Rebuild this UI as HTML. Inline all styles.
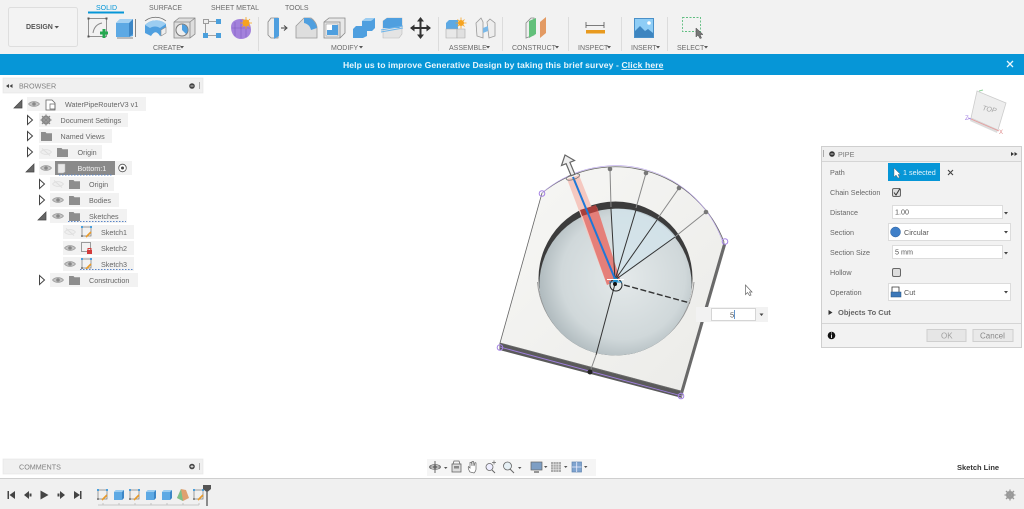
<!DOCTYPE html>
<html><head><meta charset="utf-8"><style>
html,body{margin:0;padding:0;background:#fff;width:1024px;height:509px;overflow:hidden}
svg{display:block;position:absolute;left:0;top:0;filter:blur(.3px)}
text{font-family:"Liberation Sans",sans-serif;font-size:7.2px;fill:#666}
.t{font-size:7.2px;fill:#666}
.lb{font-size:7px;fill:#6a6a6a}
.p{font-size:7.2px;fill:#666}
</style></head><body>
<svg width="1024" height="509" viewBox="0 0 1024 509" xmlns="http://www.w3.org/2000/svg">
<defs>
<linearGradient id="plate" x1="0" y1="0" x2="1" y2="1"><stop offset="0" stop-color="#f7f7f5"/><stop offset="1" stop-color="#ebebe8"/></linearGradient>
<radialGradient id="bowl" cx="0.55" cy="0.45" r="0.58"><stop offset="0" stop-color="#e4e9ea"/><stop offset=".7" stop-color="#d0d8da"/><stop offset="1" stop-color="#aab5b9"/></radialGradient>
<clipPath id="pit"><circle cx="615.500" cy="278.500" r="77"/></clipPath>
<symbol id="eye" viewBox="0 0 12 8" overflow="visible"><path d="M0.5 4C3 .8 9 .8 11.5 4 9 7.2 3 7.2 .5 4Z" fill="#c4c4c4" stroke="#999" stroke-width=".7"/><circle cx="6" cy="4" r="1.8" fill="#888"/></symbol>
<symbol id="eyeoff" viewBox="0 0 12 8" overflow="visible"><path d="M0.5 4C3 .8 9 .8 11.5 4 9 7.2 3 7.2 .5 4Z" fill="#eee" stroke="#ddd" stroke-width=".7"/><path d="M2 .5 10 7.5" stroke="#ddd"/></symbol>
<symbol id="folder" viewBox="0 0 11 9" overflow="visible"><path d="M0 0H4.5L5.5 1.2H11V9H0Z" fill="#8e8e8e"/></symbol>
<symbol id="sk" viewBox="0 0 12 12" overflow="visible"><rect x="1" y="1" width="9" height="9" fill="none" stroke="#777" stroke-width=".7"/><rect x="0" y="0" width="2" height="2" fill="#4a9fdc"/><rect x="9" y="0" width="2" height="2" fill="#4a9fdc"/><rect x="0" y="9" width="2" height="2" fill="#888"/><path d="M5 11 10 6" stroke="#e89a2a" stroke-width="1.6"/></symbol>
<symbol id="cubeb" viewBox="0 0 12 12" overflow="visible"><path d="M1 3 3 1H11V9L9 11H1Z" fill="#5da9e4"/><path d="M9 3 11 1V9L9 11Z" fill="#3c86c6"/><path d="M1 3 3 1H11L9 3Z" fill="#9ccdf1"/></symbol>
</defs>

<!-- toolbar -->
<rect x="0" y="0" width="1024" height="54" fill="#f2f2f2"/>
<rect x="8.500" y="7.500" width="69" height="39" rx="2" fill="#f3f3f3" stroke="#dedede"/>
<text x="26" y="29" style="font-size:7px;font-weight:bold;fill:#555">DESIGN</text>
<path d="M54.500 26H59L56.700 28.500Z" fill="#555"/>
<text x="96" y="10" style="font-size:7px;fill:#0696d7">SOLID</text>
<rect x="88" y="11.500" width="36" height="2" fill="#0696d7"/>
<text x="149" y="10" class="lb">SURFACE</text>
<text x="211" y="10" class="lb">SHEET METAL</text>
<text x="285" y="10" class="lb">TOOLS</text>
<text x="153" y="50" class="lb">CREATE</text><path d="M180 46H184L182 48.500Z" fill="#555"/>
<text x="331" y="50" class="lb">MODIFY</text><path d="M359 46H363L361 48.500Z" fill="#555"/>
<text x="449" y="50" class="lb">ASSEMBLE</text><path d="M486 46H490L488 48.500Z" fill="#555"/>
<text x="512" y="50" class="lb">CONSTRUCT</text><path d="M555 46H559L557 48.500Z" fill="#555"/>
<text x="578" y="50" class="lb">INSPECT</text><path d="M607 46H611L609 48.500Z" fill="#555"/>
<text x="631" y="50" class="lb">INSERT</text><path d="M656 46H660L658 48.500Z" fill="#555"/>
<text x="677" y="50" class="lb">SELECT</text><path d="M704 46H708L706 48.500Z" fill="#555"/>
<g stroke="#dcdcdc"><path d="M258.500 17V51M438.500 17V51M502.500 17V51M568.500 17V51M621.500 17V51M667.500 17V51"/></g>

<!-- create icons -->
<rect x="88.500" y="18.500" width="18" height="18" fill="none" stroke="#777" stroke-width=".8"/>
<g fill="#555"><rect x="87.500" y="17.500" width="2" height="2"/><rect x="105.500" y="17.500" width="2" height="2"/><rect x="87.500" y="35.500" width="2" height="2"/></g>
<path d="M93 33C94 27 97 24 102 23" fill="none" stroke="#888"/>
<path d="M100 33H108M104 29V38" stroke="#25a850" stroke-width="3"/>
<path d="M116 23 120 19H133V36L129 37H116Z" fill="#5da9e4"/><path d="M129 23 133 19V34L129 37Z" fill="#3c86c6"/><path d="M116 23 120 19H133L129 23Z" fill="#a4d1f2"/><path d="M117 37H133V39H117Z" fill="#bbb"/><path d="M135.500 19V37" stroke="#555" stroke-width=".7"/>
<path d="M145 25C151 19 160 19 166 24V32L160 36C157 31 154 31 151 36L145 33Z" fill="#4f9fdf"/><path d="M145 25C151 19 160 19 166 24L160 28C157 26 153 26 150 28Z" fill="#9ccdf1"/><path d="M145 21C151 16 160 16 166 21" fill="none" stroke="#666" stroke-width=".7"/><path d="M161 30 166 27V33L161 36Z" fill="#eee" stroke="#888" stroke-width=".6"/>
<path d="M174 22 179 18H195V34L190 38H174Z" fill="#dedede" stroke="#888" stroke-width=".8"/><path d="M174 22H190V38M190 22 195 18" fill="none" stroke="#888" stroke-width=".8"/><circle cx="182" cy="30" r="6" fill="#eee" stroke="#777"/><path d="M182 30V24.500A5.500 5.500 0 0 1 186 34Z" fill="#4f9fdf"/>
<rect x="203.500" y="19.500" width="5" height="4" fill="#eee" stroke="#888" stroke-width=".8"/><rect x="216" y="19" width="5" height="5" fill="#4a9fdc"/><rect x="203" y="33" width="5" height="5" fill="#4a9fdc"/><rect x="216" y="33" width="5" height="5" fill="#4a9fdc"/><path d="M209 21.500H216M205.500 24V33M208 35.500H216" stroke="#888" stroke-width=".8"/>
<path d="M231 27C231 22 235 19 241 19C247 19 251 23 251 30C251 35 247 39 241 39C235 39 231 34 231 27Z" fill="#a381dc"/><path d="M232 28H250M241 20V38M235 22V36M246 21V37" stroke="#7f5cc0" stroke-width=".6"/><circle cx="246" cy="23" r="3.500" fill="#f6a31f"/><path d="M246 17V29M240 23H252M242 19 250 27M250 19 242 27" stroke="#f6a31f" stroke-width=".8"/>

<!-- modify icons -->
<path d="M268 22 271 18H278V38H271L268 35Z" fill="#eee" stroke="#888" stroke-width=".8"/><path d="M274 18H279V36L274 39Z" fill="#4f9fdf"/><path d="M281 28H286M284 25.500 287 28 284 30.500" stroke="#444" fill="none"/>
<path d="M296 26 304 18H311C314 20 317 24 317 28V38H296Z" fill="#dedede" stroke="#999" stroke-width=".8"/><path d="M304 18H309C313 19 316 23 317 28L311 30C310 26 308 24 304 23Z" fill="#4f9fdf"/>
<path d="M324 22 329 18H345V33L340 38H324Z" fill="#e8e8e8" stroke="#888" stroke-width=".8"/><path d="M324 22H340V38" fill="none" stroke="#888" stroke-width=".8"/><rect x="326" y="24" width="12" height="12" fill="#fff" stroke="#888" stroke-width=".5"/><path d="M332 25H338V35H327V30H332Z" fill="#4f9fdf"/>
<path d="M353 29 356 26H362V21L366 18H375V28L372 31H367V36L363 38H353Z" fill="#4f9fdf"/><path d="M362 21 366 18H375L371 21Z" fill="#9ccdf1"/>
<path d="M383 21 387 18H402V34L399 38H383Z" fill="#e4e4e4" stroke="#bbb" stroke-width=".6"/><path d="M383 21 387 18H402V26L399 28H383Z" fill="#4f9fdf"/><path d="M381 30 403 26M381 32 403 28" stroke="#6bb4ea" stroke-width="1"/>
<path d="M420.500 19V37M411 28H430" stroke="#333" stroke-width="2"/><path d="M420.500 17 424 21.500H417ZM420.500 39 424 34.500H417ZM410 28 414.500 24.500V31.500ZM431 28 426.500 24.500V31.500Z" fill="#333"/>

<!-- assemble -->
<path d="M446 23 449 20H458V29H446Z" fill="#5da9e4"/><path d="M446 29H457V38H446Z" fill="#e8e8e8" stroke="#aaa" stroke-width=".6"/><path d="M457 29H465V38H457Z" fill="#e0e0e0" stroke="#aaa" stroke-width=".6"/>
<circle cx="461" cy="23" r="3" fill="#f6a31f"/><path d="M461 17.500V28.500M455.500 23H466.500M457.500 19.500 464.500 26.500M464.500 19.500 457.500 26.500" stroke="#f6a31f" stroke-width=".8"/>
<path d="M476 23 481 18 483 22V38L477 36Z" fill="#eee" stroke="#999" stroke-width=".8"/><path d="M487 22 490 19 495 23V36L489 38Z" fill="#eee" stroke="#999" stroke-width=".8"/><path d="M483 28 488 26V31L483 33Z" fill="#7ab8e8"/>

<!-- construct -->
<path d="M526 23 531 18H534V35L526 38Z" fill="#eee" stroke="#888" stroke-width=".8"/><path d="M529 21 536 18V34L529 38Z" fill="#62c07a"/><path d="M540 22 546 17V33L540 38Z" fill="#e39a63"/>

<!-- inspect -->
<path d="M586 25.500H604M586 22V28M604 22V28" stroke="#555" stroke-width=".8" fill="none"/><rect x="586" y="30" width="19" height="3.500" fill="#e89a1f"/>

<!-- insert -->
<rect x="634.500" y="18.500" width="19" height="19" fill="#8ecdf6" stroke="#4a90c8"/><path d="M635 37V31L640 26 645 31 648 29 653 33V37Z" fill="#3d85c0"/><circle cx="649" cy="23" r="1.800" fill="#fff"/>

<!-- select -->
<rect x="682.500" y="17.500" width="18" height="14" fill="none" stroke="#5fbd80" stroke-width=".9" stroke-dasharray="2 1.500"/>
<path d="M696 28V37L698 35 700 38.500 701.500 38 700 34.500H703Z" fill="#777" stroke="#444" stroke-width=".5"/>

<!-- banner -->
<rect x="0" y="54" width="1024" height="21" fill="#0696d7"/>
<text x="343" y="68" style="font-size:8.600px;font-weight:bold;fill:#e9f6fc;letter-spacing:.1px">Help us to improve Generative Design by taking this brief survey - <tspan text-decoration="underline">Click here</tspan></text>
<path d="M1007 61 1013 67M1013 61 1007 67" stroke="#e9f6fc" stroke-width="1.300"/>

<!-- browser -->
<rect x="3" y="78" width="200" height="15" fill="#f0f0f0" stroke="#e4e4e4" stroke-width=".6"/>
<path d="M6 86 9 84V88ZM9.500 86 12.500 84V88Z" fill="#444"/>
<text x="19" y="88.500" class="t" style="fill:#808080">BROWSER</text>
<circle cx="192" cy="86" r="2.800" fill="#444"/><path d="M190.500 86H193.500" stroke="#eee" stroke-width=".8"/><path d="M199.500 82V89" stroke="#aaa"/>

<g fill="#f2f2f2">
<rect x="27" y="97" width="119" height="14"/>
<rect x="39" y="113" width="89" height="14"/>
<rect x="39" y="129" width="73" height="14"/>
<rect x="39" y="145" width="63" height="14"/>
<rect x="39" y="161" width="93" height="14"/>
<rect x="50" y="177" width="64" height="14"/>
<rect x="50" y="193" width="69" height="14"/>
<rect x="50" y="209" width="77" height="14"/>
<rect x="63" y="225" width="71" height="14"/>
<rect x="63" y="241" width="71" height="14"/>
<rect x="63" y="257" width="71" height="14"/>
<rect x="50" y="273" width="88" height="14"/>
</g>
<!-- tree triangles -->
<path d="M14 108H22V100Z" fill="#666" stroke="#444" stroke-width=".7"/>
<g fill="#fff" stroke="#444" stroke-width="1"><path d="M27.500 115.500 32.500 120 27.500 124.500Z"/><path d="M27.500 131.500 32.500 136 27.500 140.500Z"/><path d="M27.500 147.500 32.500 152 27.500 156.500Z"/><path d="M39.500 179.500 44.500 184 39.500 188.500Z"/><path d="M39.500 195.500 44.500 200 39.500 204.500Z"/><path d="M39.500 275.500 44.500 280 39.500 284.500Z"/></g>
<path d="M26 172H34V164Z" fill="#666" stroke="#444" stroke-width=".7"/>
<path d="M38 220H46V212Z" fill="#666" stroke="#444" stroke-width=".7"/>

<use href="#eye" x="28" y="100" width="12" height="8"/>
<path d="M46 100H52L55 103V110H46Z" fill="#fff" stroke="#666" stroke-width=".8"/><path d="M50 104H55V109H50Z" fill="none" stroke="#666" stroke-width=".7"/>
<text x="65" y="107" class="t">WaterPipeRouterV3 v1</text>

<circle cx="46" cy="120" r="3.500" fill="none" stroke="#888" stroke-width="2"/><path d="M46 114.500V125.500M40.500 120H51.500M42 116 50 124M50 116 42 124" stroke="#888" stroke-width="1.200"/>
<text x="60.500" y="123" class="t">Document Settings</text>
<use href="#folder" x="41" y="132" width="11" height="9"/>
<text x="60.500" y="139" class="t">Named Views</text>
<use href="#eyeoff" x="40" y="148" width="12" height="8"/><use href="#folder" x="57" y="148" width="11" height="9"/>
<text x="77.500" y="155" class="t">Origin</text>

<use href="#eye" x="40" y="164" width="12" height="8"/>
<rect x="55" y="161" width="60" height="14" fill="#8a8a8a"/>
<path d="M58 164H65V172L63 173H58Z" fill="#e8e8e8" stroke="#bbb" stroke-width=".5"/>
<text x="77.500" y="171" class="t" style="fill:#f2f2f2">Bottom:1</text>
<path d="M59 175H112" stroke="#5a86c8" stroke-width="1" stroke-dasharray="1.500 1.500"/>
<circle cx="122.500" cy="168" r="3.800" fill="#fff" stroke="#555" stroke-width=".8"/><circle cx="122.500" cy="168" r="1.500" fill="#444"/>

<use href="#eyeoff" x="52" y="180" width="12" height="8"/><use href="#folder" x="69" y="180" width="11" height="9"/>
<text x="89" y="187" class="t">Origin</text>
<use href="#eye" x="52" y="196" width="12" height="8"/><use href="#folder" x="69" y="196" width="11" height="9"/>
<text x="89" y="203" class="t">Bodies</text>
<use href="#eye" x="52" y="212" width="12" height="8"/><use href="#folder" x="69" y="212" width="11" height="9"/>
<text x="89" y="219" class="t">Sketches</text>
<path d="M68 221.500H126" stroke="#5a86c8" stroke-dasharray="1.500 1.500"/>

<use href="#eyeoff" x="64" y="228" width="12" height="8"/><use href="#sk" x="81" y="226" width="12" height="12"/>
<text x="101" y="235" class="t">Sketch1</text>
<use href="#eye" x="64" y="244" width="12" height="8"/>
<rect x="81.500" y="242.500" width="9" height="9" fill="none" stroke="#777" stroke-width=".7"/><rect x="87" y="250" width="5" height="4" fill="#d33b3b"/><path d="M88 250V248.500H91V250" fill="none" stroke="#d33b3b"/>
<text x="101" y="251" class="t">Sketch2</text>
<use href="#eye" x="64" y="260" width="12" height="8"/><use href="#sk" x="81" y="258" width="12" height="12"/>
<text x="101" y="267" class="t">Sketch3</text>
<path d="M80 269.500H133" stroke="#5a86c8" stroke-dasharray="1.500 1.500"/>
<use href="#eye" x="52" y="276" width="12" height="8"/><use href="#folder" x="69" y="276" width="11" height="9"/>
<text x="89" y="283" class="t">Construction</text>

<!-- model -->
<path d="M499.500 343 680 391 682 398 499.500 350Z" fill="#5a5a5a"/>
<path d="M680 391 724 243 726 245 682 397Z" fill="#6a6a6a"/>
<path d="M500 343 542 193A116 116 0 0 1 724 242L681 391Z" fill="url(#plate)" stroke="#666" stroke-width=".8"/>
<path d="M500 347 682 396" stroke="#a07fe0" stroke-width=".9"/>
<path d="M542 193A113 113 0 0 1 722 240" fill="none" stroke="#b9a4e8" stroke-width=".6"/>
<!-- pit -->
<path d="M537.500 282A78.500 78.500 0 0 0 694 282" fill="none" stroke="#999" stroke-width="1"/>
<circle cx="615.500" cy="278.500" r="77" fill="#3c3c3c"/>
<g clip-path="url(#pit)"><circle cx="615.500" cy="285" r="76.200" fill="url(#bowl)"/>
<path d="M615 281 611 209A72 72 0 0 1 676 237Z" fill="#d2e3ea" opacity=".85"/></g>
<!-- red section -->
<path d="M567 179 579 175 620 279 607 285Z" fill="#f5c8c0"/>
<path d="M581 212 597 207 620 279 607 285Z" fill="#e57f79"/>
<path d="M580 210 596 205 598 211 582 216Z" fill="#a8403c"/>
<!-- lines -->
<g stroke="#333" stroke-width="1" fill="none">
<path d="M615 280 611 209M615 280 636 210M615 280 657 220M615 280 675 237"/>
<path d="M615 284 596 355"/>
</g>
<g stroke="#888" stroke-width="1" fill="none">
<path d="M610 169 611 207M646 173 636 208M679 188 658 218M706 212 676 236M590 372 596 355"/>
</g>
<g fill="#777"><circle cx="610" cy="169" r="2.300"/><circle cx="646" cy="173" r="2.300"/><circle cx="679" cy="188" r="2.300"/><circle cx="706" cy="212" r="2.300"/></g>
<circle cx="590" cy="372" r="2.500" fill="#222"/>
<path d="M624 285 690 303" stroke="#333" stroke-width="1.400" stroke-dasharray="6 2.500"/>
<path d="M573 177 615 279" stroke="#1e78d8" stroke-width="2"/>
<circle cx="616" cy="285" r="6" fill="none" stroke="#222" stroke-width="1"/>
<circle cx="615.500" cy="280" r="2.500" fill="#1e90d0"/><path d="M607 279.500H624" stroke="#fff" stroke-width="1"/><path d="M609 282H622" stroke="#1e90d0" stroke-width="1"/><circle cx="615" cy="284" r="2" fill="#111"/>
<ellipse cx="573" cy="177" rx="7" ry="2.500" transform="rotate(-18 573 177)" fill="none" stroke="#777" stroke-width=".8"/>
<path d="M565 155 574.500 160.500 569.900 162.300 574.900 174.300 571.100 175.700 566.100 163.700 561.500 165.500Z" fill="#eee" stroke="#666" stroke-width="1.200"/>
<g fill="none" stroke="#a583e3" stroke-width="1"><circle cx="542" cy="193.500" r="2.800"/><circle cx="725" cy="241.500" r="2.800"/><circle cx="500" cy="347.500" r="2.800"/><circle cx="681" cy="396" r="2.800"/></g>

<!-- dim input -->
<rect x="696" y="307" width="72" height="15" fill="#f2f2f2"/>
<rect x="711.500" y="308.500" width="44" height="12" fill="#fff" stroke="#ccc" stroke-width=".8"/>
<text x="730" y="317.500" style="font-size:7.5px;fill:#555">5</text><path d="M734.500 310V319" stroke="#3a7abf" stroke-width=".8"/>
<path d="M759.500 313.500H763.500L761.500 316Z" fill="#444"/>
<path d="M745.500 285V294.500L747.500 292.500 749.500 295.500 751 295 749.500 292H752Z" fill="#fff" stroke="#666" stroke-width=".7"/>

<!-- view cube -->
<path d="M977 91 1006 103 998 130 971 118Z" fill="#eeeeee" stroke="#ccc" stroke-width=".8"/>
<path d="M971 118 998 130 997 133 970 121Z" fill="#dcdcdc"/>
<text x="0" y="0" transform="translate(982 110) rotate(12)" style="font-size:7px;font-style:italic;fill:#a0a0a0">TOP</text>
<path d="M971 119 999 131" stroke="#e89a9a" stroke-width=".8"/><path d="M971 119 968 118" stroke="#a583e3"/><path d="M979 91 983 90" stroke="#8fd49a"/>
<text x="999" y="134" style="font-size:6px;fill:#d88">X</text><text x="965" y="120" style="font-size:6px;fill:#a583e3">Z</text>

<!-- pipe panel -->
<rect x="821.500" y="146.500" width="200" height="201" fill="#f2f2f2" stroke="#cfcfcf"/>
<rect x="822" y="147" width="199" height="14" fill="#efefef"/><path d="M822 161.500H1021M822 323.500H1021" stroke="#d5d5d5"/>
<path d="M823.500 150V157" stroke="#aaa"/>
<circle cx="832" cy="154" r="2.800" fill="#333"/><path d="M830.500 154H833.500" stroke="#eee" stroke-width=".8"/>
<text x="838" y="157" class="p" style="fill:#777">PIPE</text>
<path d="M1011 152 1014 154 1011 156ZM1014.500 152 1017.500 154 1014.500 156Z" fill="#333"/>
<text x="830" y="175" class="p">Path</text>
<text x="830" y="195" class="p">Chain Selection</text>
<text x="830" y="215" class="p">Distance</text>
<text x="830" y="235" class="p">Section</text>
<text x="830" y="255" class="p">Section Size</text>
<text x="830" y="275" class="p">Hollow</text>
<text x="830" y="295" class="p">Operation</text>
<rect x="888" y="163" width="52" height="18" fill="#0696d7"/>
<path d="M894 168V177L896 175 898 178 899.500 177.500 898 174.500H900.500Z" fill="#fff" stroke="#555" stroke-width=".4"/>
<text x="903" y="175" style="font-size:7.200px;fill:#e9f6fc">1 selected</text>
<path d="M948 170 953 175M953 170 948 175" stroke="#444" stroke-width="1.100"/>
<rect x="892.500" y="188.500" width="8" height="8" rx="1.500" fill="#ddd" stroke="#666"/><path d="M894 192.500 896 195 900 188.500" fill="none" stroke="#333" stroke-width="1"/>
<rect x="892.500" y="205.500" width="110" height="13" fill="#fff" stroke="#dcdcdc"/><text x="895" y="214.500" class="p" style="fill:#555">1.00</text><path d="M1004 212H1008L1006 214.500Z" fill="#444"/>
<rect x="888.500" y="223.500" width="122" height="17" fill="#fff" stroke="#dcdcdc"/><circle cx="895.500" cy="232" r="5" fill="#3f7fc8" stroke="#2a5e9c" stroke-width=".5"/><text x="904" y="235" class="p" style="fill:#555">Circular</text><path d="M1004 231H1008L1006 233.500Z" fill="#444"/>
<rect x="892.500" y="245.500" width="110" height="13" fill="#fff" stroke="#dcdcdc"/><text x="895" y="254.500" class="p" style="fill:#555">5 mm</text><path d="M1004 252H1008L1006 254.500Z" fill="#444"/>
<rect x="892.500" y="268.500" width="8" height="8" rx="1.500" fill="#ddd" stroke="#666"/>
<rect x="888.500" y="283.500" width="122" height="17" fill="#fff" stroke="#dcdcdc"/><path d="M892 287H899V293H892Z" fill="#fff" stroke="#333" stroke-width=".8"/><rect x="891" y="292" width="10" height="5" fill="#3d78b8" stroke="#24507e" stroke-width=".5"/><text x="904" y="295" class="p" style="fill:#555">Cut</text><path d="M1004 291H1008L1006 293.500Z" fill="#444"/>
<path d="M828.500 310V315L832.500 312.500Z" fill="#333"/>
<text x="838" y="315" style="font-size:7.500px;font-weight:bold;fill:#666">Objects To Cut</text>
<circle cx="831.500" cy="335.500" r="3.800" fill="#111"/><path d="M831.500 334.500V338M831.500 332.500V333.500" stroke="#fff" stroke-width=".9"/>
<rect x="927" y="329.500" width="39" height="12" fill="#e6e6e6" stroke="#cfcfcf"/><text x="941" y="338.500" style="font-size:8px;fill:#a0a0a0">OK</text>
<rect x="973" y="329.500" width="40" height="12" fill="#e9e9e9" stroke="#cfcfcf"/><text x="980" y="338.500" style="font-size:8px;fill:#888">Cancel</text>

<!-- comments -->
<rect x="3" y="459" width="200" height="15" fill="#f0f0f0" stroke="#e4e4e4" stroke-width=".6"/>
<text x="19" y="469.500" class="t" style="fill:#808080">COMMENTS</text>
<circle cx="192" cy="466.500" r="2.800" fill="#444"/><path d="M190.500 466.500H193.500M192 465V468" stroke="#eee" stroke-width=".8"/><path d="M199.500 463V470" stroke="#aaa"/>

<!-- nav bar -->
<rect x="427" y="459" width="169" height="17" fill="#f5f5f5"/>
<circle cx="435" cy="467" r="1.800" fill="#666"/><path d="M435 461V473M429.500 467H440.500" stroke="#666"/><ellipse cx="435" cy="467" rx="5.500" ry="2.300" fill="none" stroke="#666" stroke-width=".8"/>
<path d="M444 467H447.500L445.700 469Z" fill="#555"/>
<rect x="452" y="464" width="9" height="8" fill="#ddd" stroke="#666" stroke-width=".8"/><path d="M453 464 454 461H459L460 464" fill="none" stroke="#666" stroke-width=".8"/><rect x="454" y="466" width="5" height="2.500" fill="#888"/>
<path d="M470 472C468 469 468 467 468.500 466.500L470 468V462.500L471.500 462.500 472 466V461.500H473.500L474 466 475 462.500 476 463 476 469C476 471 475 472 474 473Z" fill="#fff" stroke="#666" stroke-width=".7"/>
<circle cx="489.500" cy="467" r="3.500" fill="#eef" stroke="#666" stroke-width=".8"/><path d="M492 470 495 473" stroke="#666"/><path d="M494 460.500V464.500M492 462.500H496" stroke="#666" stroke-width=".7"/>
<circle cx="507.500" cy="466" r="4" fill="#e6f0f5" stroke="#666" stroke-width=".8"/><path d="M510 469 514 473" stroke="#666" stroke-width="1"/><path d="M518 467H521.500L519.700 469Z" fill="#555"/>
<rect x="531" y="462" width="11" height="8" fill="#7d9ec4" stroke="#666" stroke-width=".7"/><path d="M534 472H539" stroke="#777" stroke-width="1.500"/><path d="M544 466H547.500L545.700 468Z" fill="#555"/>
<rect x="551" y="462" width="10" height="10" fill="#aaa"/><path d="M553.500 462V472M556 462V472M558.500 462V472M551 464.500H561M551 467H561M551 469.500H561" stroke="#eee" stroke-width=".5"/><path d="M564 466H567.500L565.700 468Z" fill="#555"/>
<rect x="572" y="462" width="9.500" height="10" fill="#7fa4cf" stroke="#5e84b0" stroke-width=".7"/><path d="M576.700 462V472M572 467H581.500" stroke="#eef" stroke-width=".8"/><path d="M584 466H587.500L585.700 468Z" fill="#555"/>

<text x="957" y="470" style="font-size:7.500px;font-weight:bold;fill:#333">Sketch Line</text>

<!-- timeline -->
<rect x="0" y="478" width="1024" height="31" fill="#f0f0f0"/><path d="M0 478.500H1024" stroke="#cfcfcf"/>
<g fill="#444"><rect x="7.500" y="491" width="1.500" height="8"/><path d="M15 491V499L9.500 495Z"/>
<path d="M24 495 29 491V499ZM29.500 493.500H31.500V496.500H29.500Z"/>
<path d="M40.500 490.500 48.500 495 40.500 499.500Z"/>
<path d="M65 495 60 491V499ZM59.500 493.500H57.500V496.500H59.500Z"/>
<path d="M74 491V499L80 495Z"/><rect x="80" y="491" width="1.500" height="8"/></g>
<use href="#sk" x="97" y="489" width="12" height="12"/>
<use href="#cubeb" x="113" y="489" width="12" height="12"/>
<use href="#sk" x="129" y="489" width="12" height="12"/>
<use href="#cubeb" x="145" y="489" width="12" height="12"/>
<use href="#cubeb" x="161" y="489" width="12" height="12"/>
<path d="M177 498 181 489 186 490 189 498 183 501Z" fill="#e0a070"/><path d="M181 489 183 501 177 498Z" fill="#7cc08a"/>
<use href="#sk" x="193" y="489" width="12" height="12"/>
<path d="M98 505H199M103 503V505M119 503V505M135 503V505M151 503V505M167 503V505M183 503V505M199 503V505" stroke="#bbb" stroke-width=".8" fill="none"/>
<path d="M203 485H211V489L208 491.500H206L203 489Z" fill="#555"/><path d="M207 490V506" stroke="#555" stroke-width="1.300"/>
<circle cx="1010" cy="495" r="3" fill="none" stroke="#999" stroke-width="2"/><path d="M1010 489.500V500.500M1004.500 495H1015.500M1006 491 1014 499M1014 491 1006 499" stroke="#999" stroke-width="1.300"/>
</svg>
</body></html>
